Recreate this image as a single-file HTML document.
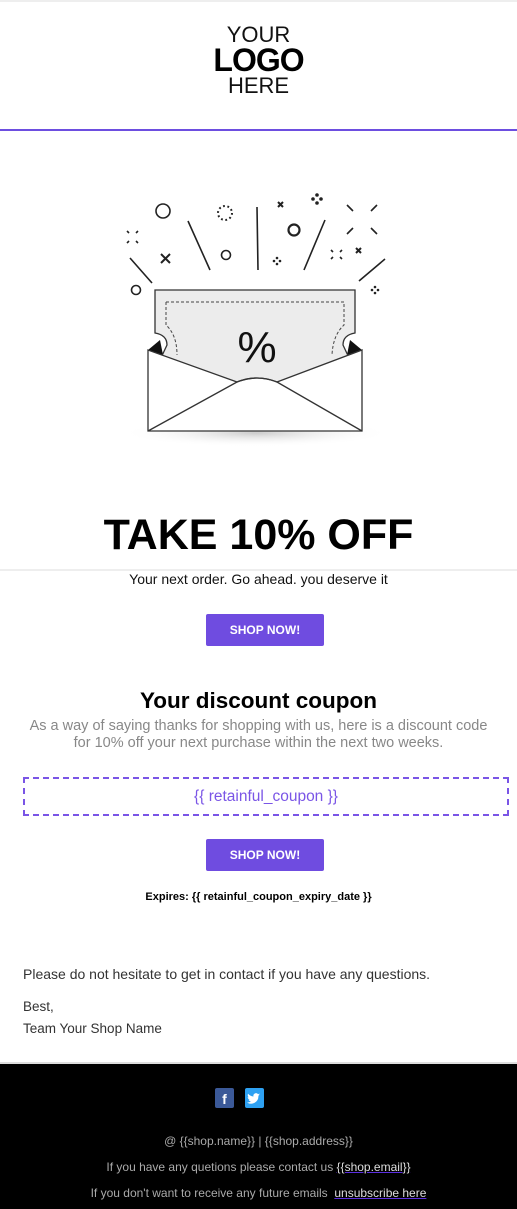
<!DOCTYPE html>
<html><head><meta charset="utf-8"><style>
*{margin:0;padding:0;box-sizing:border-box}
body{width:517px;height:1209px;position:relative;background:#fff;font-family:"Liberation Sans",sans-serif;overflow:hidden}
.a{position:absolute;left:0;width:517px;text-align:center}
.btn{position:absolute;left:206px;width:118px;height:32px;background:#6f4ce0;border-radius:2px;color:#fff;font-size:12px;font-weight:bold;text-align:center;line-height:32px}
</style></head><body>
<div style="position:absolute;top:0;left:0;width:517px;height:2px;background:#eee"></div>
<div class="a" style="top:24px;font-size:22px;line-height:22px;color:#111">YOUR</div>
<div class="a" style="top:44px;font-size:32px;line-height:32px;font-weight:bold;color:#000;letter-spacing:-1px">LOGO</div>
<div class="a" style="top:75px;font-size:22px;line-height:22px;color:#111">HERE</div>
<div style="position:absolute;top:129px;left:0;width:517px;height:2px;background:#6d4ee0"></div>

<svg style="position:absolute;left:0;top:180px" width="517" height="280" viewBox="0 180 517 280">
<defs><radialGradient id="sh" cx="50%" cy="50%" r="50%"><stop offset="0" stop-color="#ccc"/><stop offset="1" stop-color="#fff" stop-opacity="0"/></radialGradient></defs>
<ellipse cx="256" cy="433" rx="135" ry="14" fill="url(#sh)"/>
<g stroke="#222" fill="none" stroke-width="1.6">
<circle cx="163" cy="211" r="7"/><circle cx="226" cy="255" r="4.5"/><circle cx="136" cy="290" r="4.5"/><circle cx="294" cy="230" r="5.5" stroke-width="2.2"/>
<circle cx="225" cy="213" r="7" stroke-dasharray="1.8 2.6" stroke-width="2"/>
<path d="M188 221 L210 270 M257 207 L258 270 M325 220 L304 270 M130 258 L152 283 M385 259 L359 281"/>
<path d="M161 254 l9 9 M170 254 l-9 9 M278 202 l5 5 M283 202 l-5 5 M356 248 l5 5 M361 248 l-5 5" stroke-width="2"/>
<path d="M347 205 l6 6 M377 205 l-6 6 M347 234 l6 -6 M377 234 l-6 -6 M127 231 l2 2 M138 231 l-2 2 M127 243 l2 -2 M138 243 l-2 -2 M331 250 l2 2 M342 250 l-2 2 M331 259 l2 -2 M342 259 l-2 -2"/>
</g>
<g fill="#222"><circle cx="317" cy="195" r="1.8"/><circle cx="313" cy="199" r="1.8"/><circle cx="321" cy="199" r="1.8"/><circle cx="317" cy="203" r="1.8"/>
<circle cx="277" cy="258" r="1.3"/><circle cx="280" cy="261" r="1.3"/><circle cx="274" cy="261" r="1.3"/><circle cx="277" cy="264" r="1.3"/>
<circle cx="375" cy="287" r="1.3"/><circle cx="378" cy="290" r="1.3"/><circle cx="372" cy="290" r="1.3"/><circle cx="375" cy="293" r="1.3"/></g>
<path d="M148 350 L160 340 L163 355 Z M362 350 L350 340 L347 355 Z" fill="#111"/>
<path d="M155 290 L355 290 L355 333 Q343 335 343 345 L350 360 L257 390 L160 360 L167 345 Q167 335 155 333 Z" fill="#ececec" stroke="#333" stroke-width="1.3"/>
<path d="M166 302 L344 302 L344 325 Q333 335 332 355 M166 302 L166 325 Q177 335 177 355" fill="none" stroke="#444" stroke-width="1" stroke-dasharray="3 2"/>
<text x="257" y="362" text-anchor="middle" font-family="Liberation Sans" font-size="44" fill="#111">%</text>
<path d="M148 350 L148 431 L362 431 L362 350 L277 382 Q257 374 237 382 Z" fill="#fff" stroke="#333" stroke-width="1.3"/>
<path d="M148 431 L237 382 Q257 374 277 382 L362 431" fill="none" stroke="#333" stroke-width="1.3"/>
</svg>

<div class="a" style="top:512px;font-size:43px;line-height:46px;font-weight:bold;color:#000">TAKE 10% OFF</div>
<div style="position:absolute;top:569px;left:0;width:517px;height:2px;background:#eee"></div>
<div class="a" style="top:571px;font-size:14px;line-height:17px;color:#111">Your next order. Go ahead. you deserve it</div>
<div class="btn" style="top:614px">SHOP NOW!</div>
<div class="a" style="top:687px;font-size:22.5px;line-height:27px;font-weight:bold;color:#000">Your discount coupon</div>
<div class="a" style="top:718px;font-size:14.5px;line-height:17px;color:#888">As a way of saying thanks for shopping with us, here is a discount code<br>for 10% off your next purchase within the next two weeks.</div>
<div style="position:absolute;left:23px;top:777px;width:486px;height:39px;border:2px dashed #7a55e6;text-align:center;line-height:35px;font-size:15.5px;color:#7a55e6">{{ retainful_coupon }}</div>
<div class="btn" style="top:839px">SHOP NOW!</div>
<div class="a" style="top:891px;font-size:11px;line-height:13px;font-weight:bold;color:#000">Expires: {{ retainful_coupon_expiry_date }}</div>
<div style="position:absolute;left:23px;top:966px;font-size:14px;line-height:17px;color:#333">Please do not hesitate to get in contact if you have any questions.</div>
<div style="position:absolute;left:23px;top:996px;font-size:13.5px;line-height:22px;color:#333">Best,<br>Team Your Shop Name</div>
<div style="position:absolute;top:1062px;left:0;width:517px;height:2px;background:#ddd"></div>
<div style="position:absolute;top:1064px;left:0;width:517px;height:145px;background:#000"></div>
<div style="position:absolute;left:215px;top:1088px;width:19px;height:20px;background:#3b5998;border-radius:2px;color:#fff;font-weight:bold;font-size:14px;text-align:center;line-height:22px">f</div>
<svg style="position:absolute;left:245px;top:1088px" width="19" height="20"><rect width="19" height="20" rx="2" fill="#2ea1f2"/><path d="M15 6.5c-.5.2-1 .4-1.5.4.6-.3 1-.8 1.2-1.4-.5.3-1.1.5-1.7.6a2.6 2.6 0 0 0-4.5 2.4C6.3 8.4 4.4 7.4 3.1 5.8c-.7 1.2-.3 2.7.8 3.5-.4 0-.8-.1-1.2-.3 0 1.3.9 2.4 2.1 2.6-.4.1-.8.1-1.2 0 .3 1.1 1.3 1.8 2.4 1.8A5.3 5.3 0 0 1 2 14.5 7.4 7.4 0 0 0 13.4 8v-.3c.6-.4 1.1-.9 1.6-1.2z" fill="#fff"/></svg>
<div class="a" style="top:1134px;font-size:12px;line-height:14px;color:#aaa">@ {{shop.name}} | {{shop.address}}</div>
<div class="a" style="top:1160px;font-size:12px;line-height:14px;color:#aaa">If you have any quetions please contact us <span style="color:#ddd;text-decoration:underline;text-decoration-color:#5a2de0">{{shop.email}}</span></div>
<div class="a" style="top:1186px;font-size:12px;line-height:14px;color:#aaa">If you don't want to receive any future emails &nbsp;<span style="color:#ddd;text-decoration:underline;text-decoration-color:#5a2de0">unsubscribe here</span></div>
</body></html>
